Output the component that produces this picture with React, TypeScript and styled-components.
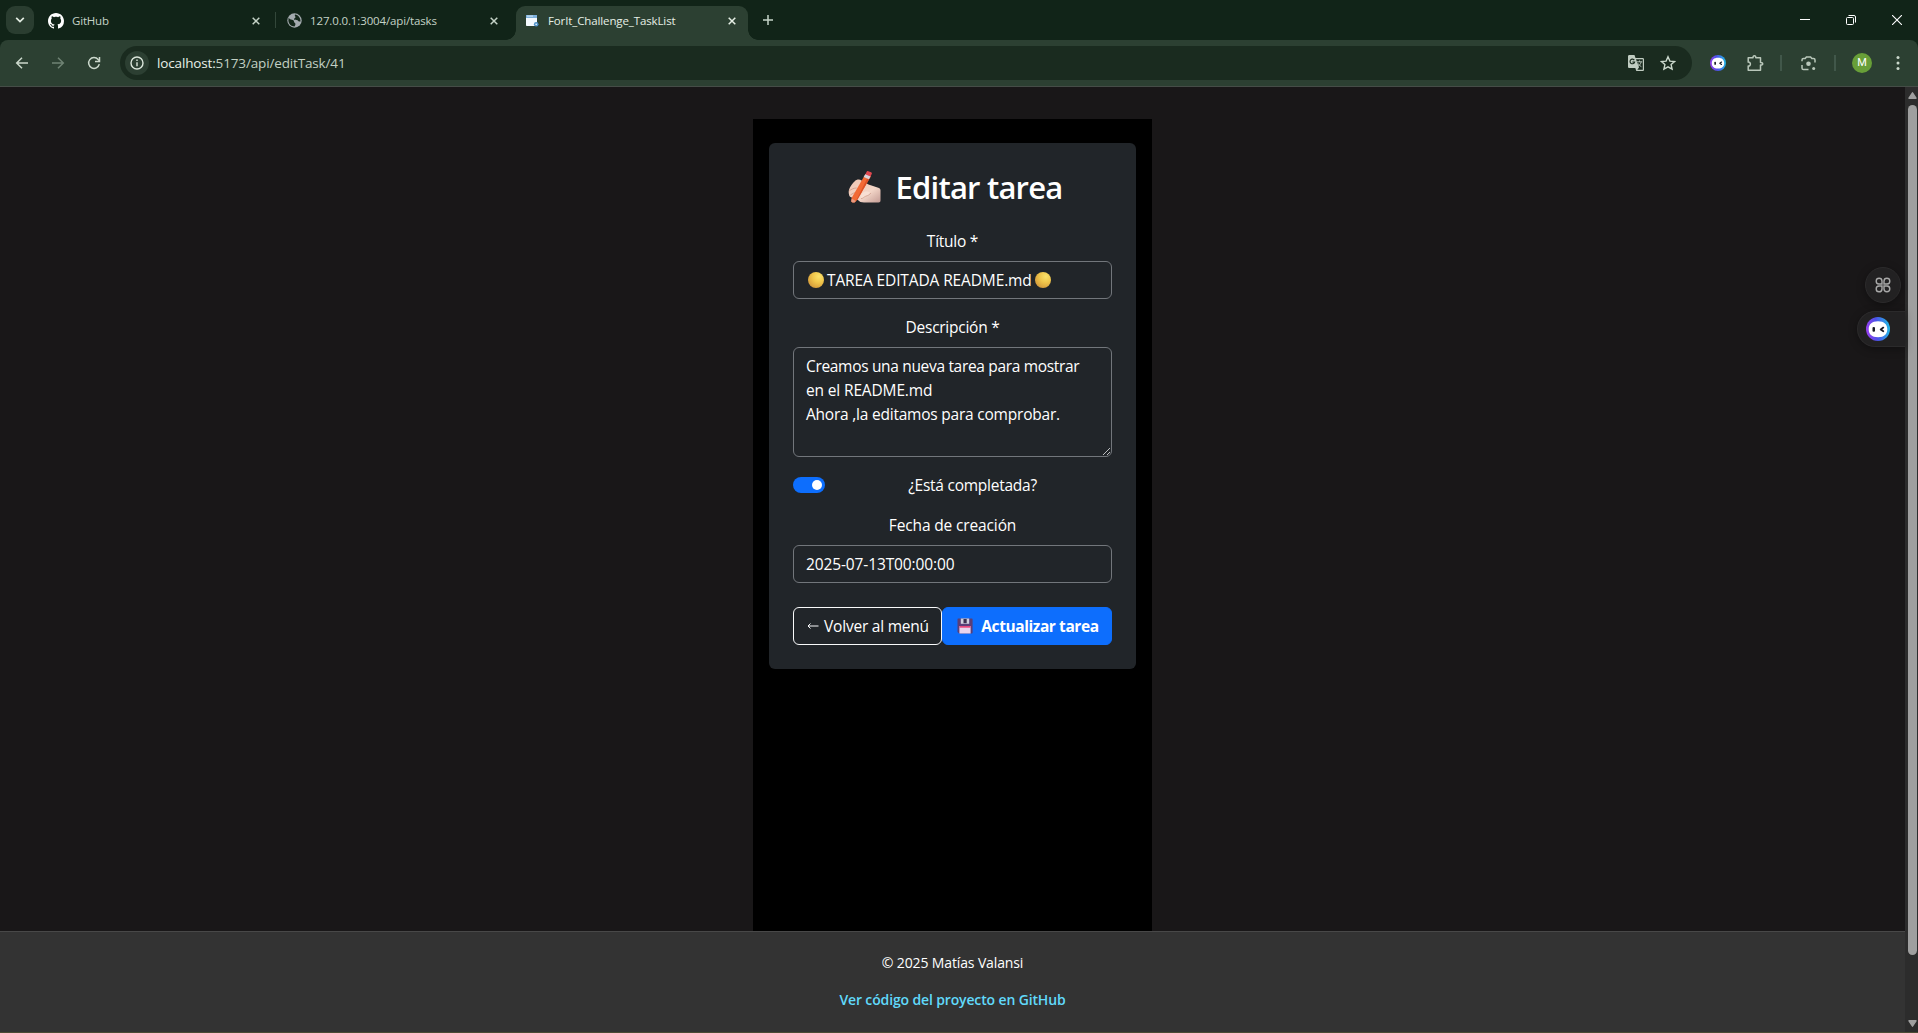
import React from 'react';
import styled, { createGlobalStyle } from 'styled-components';

const Global = createGlobalStyle`
  * { box-sizing: border-box; }
  html, body, #root { height: 100%; }
  body { margin: 0; overflow: hidden; background: #191718; font-family: "Open Sans", "Noto Sans", sans-serif; }
  svg { display: block; flex: none; }
`;

const Browser = styled.div`
  display: flex;
  flex-direction: column;
  width: 1918px;
  height: 1033px;
  background: #112418;
`;

/* Tab strip */
const TabStrip = styled.div`
  display: flex;
  height: 40px;
  flex: none;
  padding-left: 6px;
`;
const TabSearch = styled.div`
  display: flex;
  align-items: center;
  justify-content: center;
  width: 28px;
  height: 28px;
  margin-top: 6px;
  border-radius: 9px;
  background: #2a3d30;
`;
const Tab = styled.div<{ $width: number; $left: number; $right: number }>`
  display: flex;
  align-items: center;
  width: ${(p) => p.$width}px;
  padding: 1px ${(p) => p.$right}px 0 ${(p) => p.$left}px;
  color: #c5d3c7;
`;
const ActiveTab = styled(Tab)`
  position: relative;
  height: 34px;
  margin-top: 6px;
  padding-bottom: 5px;
  border-radius: 9px 9px 0 0;
  background: #2c4032;
  color: #e6efe5;
  &::before, &::after {
    content: '';
    position: absolute;
    bottom: 0;
    width: 10px;
    height: 10px;
  }
  &::before { left: -10px; background: radial-gradient(circle at 0 0, transparent 9.5px, #2c4032 10px); }
  &::after { right: -10px; background: radial-gradient(circle at 100% 0, transparent 9.5px, #2c4032 10px); }
`;
const TabTitle = styled.span<{ $gap: number; $ls: number }>`
  flex: 1;
  margin-left: ${(p) => p.$gap}px;
  font-size: 11.5px;
  line-height: 16px;
  letter-spacing: ${(p) => p.$ls}px;
  white-space: nowrap;
`;
const TabDivider = styled.div`
  width: 1px;
  height: 16px;
  margin-top: 12px;
  background: #33473a;
`;
const NewTab = styled.div`
  display: flex;
  align-items: center;
  padding-left: 15px;
`;
const WindowButtons = styled.div`
  display: flex;
  align-items: center;
  gap: 36px;
  margin-left: auto;
  padding-right: 16px;
`;

/* Toolbar */
const Toolbar = styled.div`
  display: flex;
  align-items: center;
  flex: none;
  height: 47px;
  padding-left: 15px;
  border-bottom: 1px solid #454d47;
  border-radius: 8px 8px 0 0;
  background: #2c4032;
`;
const NavButtons = styled.div`
  display: flex;
  flex: none;
  gap: 22px;
  width: 105px;
`;
const AddressBar = styled.div`
  display: flex;
  align-items: center;
  flex: none;
  width: 1572px;
  height: 34px;
  padding: 0 16px 0 5px;
  border-radius: 17px;
  background: #1a2b1f;
`;
const SiteInfo = styled.div`
  display: flex;
  align-items: center;
  justify-content: center;
  width: 24px;
  height: 24px;
  margin-right: 8px;
  border-radius: 50%;
  background: #2c3f32;
`;
const Url = styled.span`
  flex: 1;
  font-size: 13.5px;
  line-height: 20px;
  letter-spacing: -0.15px;
  color: #c3d0c4;
`;
const UrlHost = styled.span`
  color: #e8f0e8;
`;
const BarIcons = styled.div`
  display: flex;
  align-items: center;
  gap: 16px;
`;
const Extensions = styled.div`
  display: flex;
  align-items: center;
`;
const Tool = styled.div<{ $gap: number }>`
  display: flex;
  flex: none;
  margin-left: ${(p) => p.$gap}px;
`;
const ToolDivider = styled.div`
  width: 2px;
  height: 16px;
  background: #41574a;
`;
const Avatar = styled.div`
  display: flex;
  align-items: center;
  justify-content: center;
  width: 20px;
  height: 20px;
  border-radius: 50%;
  background: #689f38;
  color: #fff;
  font: 11px/20px Roboto, sans-serif;
`;

/* Page viewport */
const Viewport = styled.div`
  position: relative;
  display: flex;
  flex: 1;
  min-height: 0;
`;
const Page = styled.div`
  display: flex;
  flex-direction: column;
  width: 1905px;
  background: #191718;
  color: #fff;
`;
const Main = styled.main`
  display: flex;
  flex: 1;
  justify-content: center;
  padding-top: 32px;
`;
const Column = styled.div`
  width: 399px;
  padding: 24px 16px;
  background: #000;
`;
const Card = styled.form`
  display: flex;
  flex-direction: column;
  height: 526px;
  padding: 24px;
  border-radius: 6px;
  background: #212529;
`;
const Heading = styled.h2`
  display: flex;
  align-items: center;
  justify-content: center;
  gap: 15px;
  margin: 0 0 23px;
  padding: 1px 0 0 5px;
  font-size: 31px;
  font-weight: 600;
  line-height: 38px;
  letter-spacing: -0.8px;
`;
const Field = styled.div`
  margin-bottom: 16px;
`;
const Label = styled.label<{ $ls: number }>`
  display: block;
  margin-bottom: 8px;
  font-size: 15.5px;
  line-height: 24px;
  letter-spacing: ${(p) => p.$ls}px;
  text-align: center;
`;
const Control = styled.div<{ $ls?: number; $tall?: boolean }>`
  position: relative;
  display: flex;
  flex-direction: ${(p) => (p.$tall ? 'column' : 'row')};
  align-items: ${(p) => (p.$tall ? 'flex-start' : 'center')};
  height: ${(p) => (p.$tall ? 110 : 38)}px;
  padding: 6px 12px;
  border: 1px solid #72767b;
  border-radius: 6px;
  font-size: 15.5px;
  line-height: 24px;
  letter-spacing: ${(p) => p.$ls ?? 0}px;
  white-space: nowrap;
`;
const Line = styled.span<{ $ls: number }>`
  letter-spacing: ${(p) => p.$ls}px;
`;
const Coin = styled.i<{ $gap: string }>`
  width: 16px;
  height: 16px;
  margin: ${(p) => p.$gap};
  border-radius: 50%;
  background: radial-gradient(circle at 68% 28%, #fbe26a 0, #f0c64b 38%, #d9a23d 72%, #b98345 100%);
`;
const Grip = styled.svg`
  position: absolute;
  right: 1px;
  bottom: 1px;
`;
const SwitchRow = styled.div`
  display: flex;
  align-items: center;
  height: 24px;
  margin-bottom: 16px;
`;
const Toggle = styled.div`
  display: flex;
  justify-content: flex-end;
  align-items: center;
  width: 32px;
  height: 16px;
  margin-right: 8px;
  padding-right: 3px;
  border-radius: 8px;
  background: #0d6efd;
`;
const Knob = styled.i`
  width: 10.5px;
  height: 10.5px;
  border-radius: 50%;
  background: #fff;
`;
const SwitchLabel = styled(Label)`
  flex: 1;
  margin: 0;
`;
const Actions = styled.div`
  display: flex;
  margin-top: 8px;
`;
const Button = styled.div<{ $primary?: boolean }>`
  display: flex;
  align-items: center;
  justify-content: center;
  width: ${(p) => (p.$primary ? 170 : 149)}px;
  height: 38px;
  padding-left: ${(p) => (p.$primary ? 2 : 1)}px;
  border: 1px solid ${(p) => (p.$primary ? '#0d6efd' : '#f8f9fa')};
  border-radius: 6px;
  background: ${(p) => (p.$primary ? '#0d6efd' : 'transparent')};
  font-size: 15.5px;
  font-weight: ${(p) => (p.$primary ? 700 : 400)};
  line-height: 24px;
  letter-spacing: ${(p) => (p.$primary ? -0.42 : -0.22)}px;
  gap: ${(p) => (p.$primary ? 8 : 5)}px;
  white-space: nowrap;
`;
const Footer = styled.footer`
  display: flex;
  flex-direction: column;
  align-items: center;
  height: 101px;
  padding-top: 20px;
  border-top: 1px solid #484848;
  background: #333;
  font-size: 14px;
  line-height: 22px;
`;
const Copyright = styled.p`
  margin: 0 0 15px;
  letter-spacing: -0.13px;
`;
const RepoLink = styled.a`
  color: #61dafb;
  font-weight: 600;
  letter-spacing: -0.14px;
`;
const ScrollTrack = styled.div`
  display: flex;
  flex-direction: column;
  align-items: center;
  width: 13px;
  padding: 5px 1px 5px 3px;
  background: #2c2c2c;
`;
const Thumb = styled.div`
  width: 9px;
  height: 850px;
  margin-top: 6px;
  margin-bottom: auto;
  border-radius: 5px;
  background: #9f9f9f;
`;
const BottomEdge = styled.div`
  flex: none;
  height: 1px;
  background: #4b4b35;
`;
const FloatCircle = styled.div`
  position: absolute;
  left: 1865px;
  top: 180px;
  display: flex;
  align-items: center;
  justify-content: center;
  width: 36px;
  height: 36px;
  border: 1px solid #2b2a2b;
  border-radius: 50%;
  background: #222122;
  box-shadow: 0 2px 8px rgba(0, 0, 0, 0.35);
`;
const FloatPill = styled.div`
  position: absolute;
  left: 1857px;
  top: 224px;
  display: flex;
  align-items: center;
  width: 48px;
  height: 36px;
  padding-left: 8px;
  border: 1px solid #2b2a2b;
  border-right: 0;
  border-radius: 18px 0 0 18px;
  background: #222122;
  box-shadow: 0 2px 8px rgba(0, 0, 0, 0.35);
`;

const Close = ({ color = '#c5d3c7' }: { color?: string }) => (
  <svg width="8" height="8" viewBox="0 0 8 8">
    <path d="M.7.7l6.6 6.6M7.3.7L.7 7.3" stroke={color} strokeWidth="1.5" />
  </svg>
);

const Robot = ({ size, id }: { size: number; id: string }) => (
  <svg width={size} height={size} viewBox="0 0 24 24">
    <defs>
      <linearGradient id={id} x1="0" y1=".6" x2="1" y2=".5">
        <stop offset="0" stopColor="#9a3df0" />
        <stop offset=".45" stopColor="#4b52e8" />
        <stop offset="1" stopColor="#22b8e6" />
      </linearGradient>
    </defs>
    <circle cx="12" cy="12" r="12" fill={`url(#${id})`} />
    <path d="M12 4.200c6.200 0 9.300 3.200 9.300 8s-3.100 8-9.300 8-9.300-3.200-9.300-8 3.100-8 9.300-8z" fill="#fff" />
    <rect x="6.500" y="10" width="2.500" height="4.800" rx="1.100" fill="#191b26" />
    <path d="M17.300 10.600l-2.600 1.800 2.600 1.800" fill="none" stroke="#191b26" strokeWidth="1.800" strokeLinejoin="round" strokeLinecap="round" />
  </svg>
);

const WritingHand = () => (
  <svg width="33" height="33" viewBox="0 0 33 33">
    <defs>
      <linearGradient id="skin" x1="0" y1="0" x2="1" y2="1">
        <stop offset="0" stopColor="#f0c4b0" />
        <stop offset=".6" stopColor="#f3d6c8" />
        <stop offset="1" stopColor="#c49c95" />
      </linearGradient>
    </defs>
    <path d="M.8 22.500C.2 18 3 14 6.500 10.500 8.500 8.300 11.500 8 13.500 9.500l7 4 10.500 3.500c1 .5 1.500 1.200 1.500 2.500v10c0 1.300-.6 2-2 2H16c-2.500 0-5-.8-6-2.500l-4-1.500-3.500-1.500C1.500 25.500 1 24 .8 22.500z" fill="url(#skin)" />
    <path d="M1.200 20c2-1.800 4.800-3 7.500-3M2.500 24c2-1.500 4-2.500 6-2.500" stroke="#d39e8a" strokeWidth=".9" fill="none" />
    <path d="M17.300 3.200l5.400 2.200L9.800 28 7 31.200c-1 .8-3.600.4-3.800-.9l.4-3.400z" fill="#f26a35" />
    <path d="M20.600 4.500l2.100.9L9.800 28l-2.200 2.500z" fill="#dc5228" />
    <path d="M3.700 27.500l-.5 2.800c.2 1.200 2.600 1.600 3.600.9l1-1.200z" fill="#e89a80" />
    <path d="M18.500.9c.4-.8 1-1 1.800-.7l2.800 1c.8.300 1 1 .6 1.700l-1.300 2.900-5.200-2.100z" fill="#e0474f" />
    <path d="M17.200 3.300l5.300 2.200-1.600 2.700-5.200-2.300z" fill="#d9d3dc" />
    <path d="M12.500 26.500c.3-3 2.200-5.600 5-5.900 2-.1 3.300.2 4.800 1.200-1.500 2.200-3.300 2.900-5 3.600-1.500.6-3.200 3-4.800 1.100z" fill="#f8dfd3" />
    <path d="M13 27.600c2.300-.1 2.800-1.700 4.800-2.400 2-.6 3.700-1.200 5-3.200" stroke="#cf9f8f" strokeWidth=".8" fill="none" />
  </svg>
);

const Floppy = () => (
  <svg width="16" height="16" viewBox="0 0 16 16">
    <path d="M1.200.5h13.600c.5 0 .8.400.8.900v13.200c0 .5-.3.900-.8.900H2.200L.5 14V1.400c0-.5.2-.9.700-.9z" fill="#5a3e78" />
    <path d="M3.800.5h8.400v5.300H3.800z" fill="#cfd0de" />
    <path d="M6.500 1h3.200v4.200H6.500z" fill="#3b3152" />
    <path d="M2.400 8h11.200v7.500H2.400z" fill="#e9d5ee" />
    <path d="M2.400 8h11.200v1.700H2.400z" fill="#e8467c" />
  </svg>
);

const PUZZLE = 'M1.200 2.800h4.800c0-2 .7-2 1.400-2s1.400 0 1.400 2h4.700v4.700c2 0 2.200.6 2.200 1.300s-.2 1.300-2.200 1.300v5.100H1.200v-4.100c1.700.1 2.200-1 2.200-2s-.5-2.100-2.200-2z';

export default function App() {
  return (
    <>
      <Global />
      <Browser>
        <TabStrip>
          <TabSearch>
            <svg width="10" height="6" viewBox="0 0 10 6">
              <path d="M1.200.8L5 4.600 8.800.8" fill="none" stroke="#e2ece2" strokeWidth="1.700" />
            </svg>
          </TabSearch>
          <Tab $width={241} $left={14} $right={15}>
            <svg width="16" height="16" viewBox="0 0 16 16">
              <path fill="#fff" d="M8 0C3.580 0 0 3.580 0 8c0 3.540 2.290 6.530 5.470 7.590.4.070.55-.17.55-.38 0-.19-.01-.82-.01-1.490-2.010.37-2.530-.49-2.690-.94-.09-.23-.48-.94-.82-1.130-.28-.15-.68-.52-.01-.53.63-.01 1.080.58 1.230.82.72 1.210 1.870.87 2.330.66.070-.52.280-.87.510-1.070-1.780-.2-3.640-.89-3.640-3.950 0-.87.310-1.590.82-2.150-.08-.2-.36-1.020.08-2.120 0 0 .67-.21 2.200.82.640-.18 1.320-.27 2-.27s1.360.09 2 .27c1.530-1.040 2.200-.82 2.200-.82.440 1.100.160 1.920.080 2.120.510.560.82 1.270.82 2.150 0 3.070-1.870 3.750-3.650 3.950.290.250.540.730.540 1.480 0 1.070-.01 1.930-.01 2.200 0 .21.150.46.550.38A8.010 8.010 0 0 0 16 8c0-4.420-3.580-8-8-8z" />
            </svg>
            <TabTitle $gap={8} $ls={-0.18}>GitHub</TabTitle>
            <Close />
          </Tab>
          <TabDivider />
          <Tab $width={240} $left={11} $right={18}>
            <svg width="15" height="15" viewBox="0 0 15 15">
              <circle cx="7.500" cy="7.500" r="7.200" fill="#a3aaae" />
              <path d="M1.600 4.500C2.400 6.600 5 6.500 6.300 7.300c1 .7.300 2 1.400 2.500 1.400.5.600 2.600-.2 3.700C4 13.500 1.500 10.500 1.400 7.500zM8 1.500c-.8 1.200.6 1.600.5 2.700-.1 1-1.700 1-1.500 2 .3 1 2.400.3 3.600 1 .8.500.9 1.600 2.900 1.400C13.700 5 11.500 2 8 1.500z" fill="#15281b" />
            </svg>
            <TabTitle $gap={8} $ls={-0.135}>127.0.0.1:3004/api/tasks</TabTitle>
            <Close />
          </Tab>
          <ActiveTab $width={232} $left={10} $right={12}>
            <svg width="13" height="12" viewBox="0 0 13 12">
              <rect width="11" height="11" rx=".8" fill="#f5faff" />
              <path d="M0 0h11v3H0z" fill="#7eb1dc" />
              <path d="M1 1.100h6" stroke="#e6f2fb" strokeWidth=".8" />
              <circle cx="10.200" cy="9.300" r="2.300" fill="#4e8fc6" />
              <circle cx="10.200" cy="9.300" r=".9" fill="#d9ecfa" />
            </svg>
            <TabTitle $gap={9} $ls={-0.12}>ForIt_Challenge_TaskList</TabTitle>
            <Close color="#e6efe5" />
          </ActiveTab>
          <NewTab>
            <svg width="10" height="10" viewBox="0 0 10 10">
              <path d="M5 0v10M0 5h10" stroke="#c5d3c7" strokeWidth="1.500" />
            </svg>
          </NewTab>
          <WindowButtons>
            <svg width="10" height="10" viewBox="0 0 10 10">
              <path d="M0 4.500h10" stroke="#fff" />
            </svg>
            <svg width="10" height="10" viewBox="0 0 10 10">
              <rect x=".5" y="2.500" width="7" height="7" rx="1" fill="none" stroke="#fff" />
              <path d="M2.500.5H8A1.500 1.500 0 0 1 9.500 2v5.500" fill="none" stroke="#fff" />
            </svg>
            <svg width="10" height="10" viewBox="0 0 10 10">
              <path d="M0 0l10 10M10 0L0 10" stroke="#fff" strokeWidth="1.100" />
            </svg>
          </WindowButtons>
        </TabStrip>

        <Toolbar>
          <NavButtons>
            <svg width="14" height="14" viewBox="0 0 14 14">
              <path d="M13 7H2M7 1.700L1.700 7 7 12.300" fill="none" stroke="#cbd8cc" strokeWidth="1.500" />
            </svg>
            <svg width="14" height="14" viewBox="0 0 14 14">
              <path d="M1 7h11M7 1.700L12.300 7 7 12.300" fill="none" stroke="#6f8374" strokeWidth="1.500" />
            </svg>
            <svg width="14" height="14" viewBox="0 0 14 14">
              <path d="M12.300 8.200A5.400 5.400 0 1 1 11.200 3.500L12.600 5" fill="none" stroke="#cbd8cc" strokeWidth="1.500" />
              <path d="M12.500 1v4.500H8" fill="none" stroke="#cbd8cc" strokeWidth="1.500" />
            </svg>
          </NavButtons>
          <AddressBar>
            <SiteInfo>
              <svg width="14" height="14" viewBox="0 0 14 14">
                <circle cx="7" cy="7" r="6" fill="none" stroke="#dbe6db" strokeWidth="1.400" />
                <path d="M7 6.200v4M7 3.600V5" stroke="#dbe6db" strokeWidth="1.400" />
              </svg>
            </SiteInfo>
            <Url><UrlHost>localhost:</UrlHost>5173/api/editTask/41</Url>
            <BarIcons>
              <svg width="16" height="16" viewBox="0 0 16 16">
                <path d="M1.300 0h5.200l1 3h7.200c.7 0 1.300.600 1.300 1.300v10.400c0 .7-.6 1.300-1.300 1.300H8.300l-1-3h-6C.6 13 0 12.400 0 11.700V1.300C0 .6.6 0 1.300 0z" fill="#c0ccc1" />
                <path d="M8 4.200h6.800v10.600H9.300L11 12.500z" fill="#1a2b1f" />
                <path d="M6.300 5.200A2.300 2.300 0 1 0 6.600 7H4.300" fill="none" stroke="#1a2b1f" strokeWidth="1.200" />
                <path d="M8.900 6.800h5.300M11.500 5.500v1.300M13.200 6.800c-.4 2-1.700 3.600-3.500 4.700M9.800 8.200c.8 1.500 2 2.700 3.600 3.500" fill="none" stroke="#c0ccc1" strokeWidth=".9" />
              </svg>
              <svg width="16" height="16" viewBox="0 0 16 16">
                <path d="M8 1.800l1.900 4.300 4.700.4-3.500 3.100 1 4.600L8 11.800l-4.100 2.400 1-4.600-3.500-3.100 4.700-.4z" fill="none" stroke="#cbd8cc" strokeWidth="1.400" />
              </svg>
            </BarIcons>
          </AddressBar>
          <Extensions>
            <Tool $gap={18}><Robot size={16} id="ring-small" /></Tool>
            <Tool $gap={21}>
              <svg width="17" height="17" viewBox="0 0 17 17">
                <path d={PUZZLE} fill="none" stroke="#b9c7ba" strokeWidth="1.500" strokeLinejoin="round" />
              </svg>
            </Tool>
            <Tool $gap={16}><ToolDivider /></Tool>
            <Tool $gap={19}>
              <svg width="15" height="15" viewBox="0 0 15 15">
                <path d="M1 5.300V4c0-.9.700-1.500 1.500-1.500h1.700L5.400 1h4.200l1.200 1.500h1.700c.8 0 1.500.6 1.500 1.500v2.500M1 9v3c0 1 .7 1.600 1.500 1.600h5" fill="none" stroke="#b9c7ba" strokeWidth="1.500" />
                <circle cx="7.500" cy="7.700" r="2.300" fill="#b9c7ba" />
                <circle cx="12.700" cy="12.600" r="1.500" fill="#b9c7ba" />
              </svg>
            </Tool>
            <Tool $gap={18}><ToolDivider /></Tool>
            <Tool $gap={16}><Avatar>M</Avatar></Tool>
            <Tool $gap={21}>
              <svg width="10" height="16" viewBox="0 0 10 16">
                <circle cx="5" cy="2.500" r="1.500" fill="#cbd8cc" />
                <circle cx="5" cy="8" r="1.500" fill="#cbd8cc" />
                <circle cx="5" cy="13.500" r="1.500" fill="#cbd8cc" />
              </svg>
            </Tool>
          </Extensions>
        </Toolbar>

        <Viewport>
          <Page>
            <Main>
              <Column>
                <Card>
                  <Heading><WritingHand />Editar tarea</Heading>
                  <Field>
                    <Label $ls={-0.25}>Título *</Label>
                    <Control $ls={-0.13}>
                      <Coin $gap="-1px 3px 0 2px" />TAREA EDITADA README.md<Coin $gap="-1px 0 0 3px" />
                    </Control>
                  </Field>
                  <Field>
                    <Label $ls={-0.26}>Descripción *</Label>
                    <Control $tall>
                      <Line $ls={-0.325}>Creamos una nueva tarea para mostrar</Line>
                      <Line $ls={-0.149}>en el README.md</Line>
                      <Line $ls={-0.219}>Ahora ,la editamos para comprobar.</Line>
                      <Grip width="7" height="7" viewBox="0 0 7 7">
                        <path d="M0 7L7 0M4 7L7 4" stroke="#d0d2d4" strokeWidth=".9" />
                      </Grip>
                    </Control>
                  </Field>
                  <SwitchRow>
                    <Toggle><Knob /></Toggle>
                    <SwitchLabel $ls={-0.249}>¿Está completada?</SwitchLabel>
                  </SwitchRow>
                  <Field>
                    <Label $ls={-0.139}>Fecha de creación</Label>
                    <Control $ls={-0.12}>2025-07-13T00:00:00</Control>
                  </Field>
                  <Actions>
                    <Button>
                      <svg width="12" height="8" viewBox="0 0 12 8">
                        <path d="M11.500 4H1M3.500 1.500L1 4l2.500 2.500" fill="none" stroke="#f8f9fa" />
                      </svg>
                      Volver al menú
                    </Button>
                    <Button $primary><Floppy />Actualizar tarea</Button>
                  </Actions>
                </Card>
              </Column>
            </Main>
            <Footer>
              <Copyright>© 2025 Matías Valansi</Copyright>
              <RepoLink>Ver código del proyecto en GitHub</RepoLink>
            </Footer>
          </Page>
          <ScrollTrack>
            <svg width="9" height="7" viewBox="0 0 9 7"><path d="M4.500.8L8 6.200H1z" fill="#9f9f9f" stroke="#9f9f9f" strokeWidth="1.400" strokeLinejoin="round" /></svg>
            <Thumb />
            <svg width="9" height="7" viewBox="0 0 9 7"><path d="M4.500 6.200L8 .8H1z" fill="#9f9f9f" stroke="#9f9f9f" strokeWidth="1.400" strokeLinejoin="round" /></svg>
          </ScrollTrack>
          <FloatCircle>
            <svg width="16" height="16" viewBox="0 0 16 16">
              <path d="M7 7H3.900A2.900 2.900 0 1 1 7 4zM9 7V4a2.900 2.900 0 1 1 3.100 3zM7 9v3.100A2.900 2.900 0 1 1 4 9zM9 9h3.100A2.900 2.900 0 1 1 9 12z" fill="none" stroke="#a9a9a9" strokeWidth="1.400" />
            </svg>
          </FloatCircle>
          <FloatPill><Robot size={24} id="ring-large" /></FloatPill>
        </Viewport>
        <BottomEdge />
      </Browser>
    </>
  );
}
